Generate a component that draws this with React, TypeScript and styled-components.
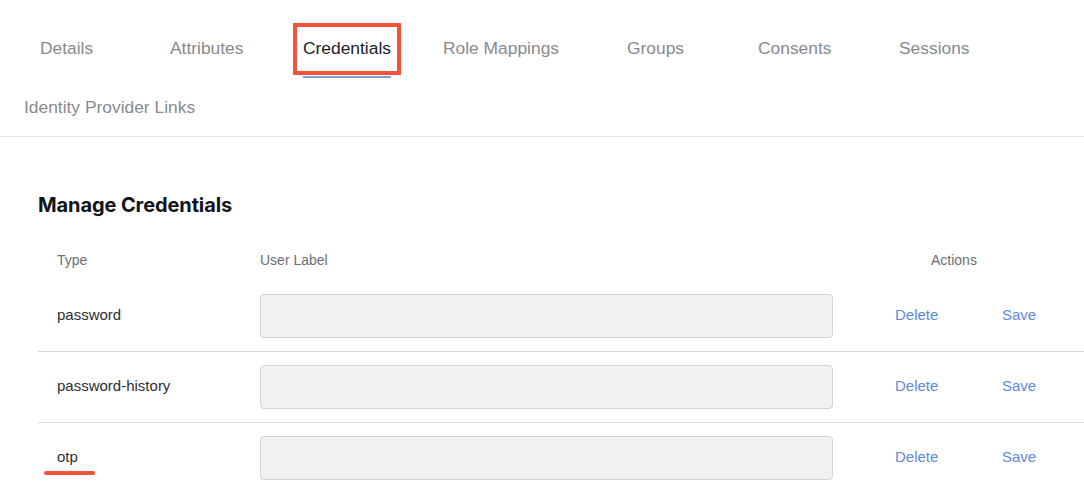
import React from "react";
import styled, { createGlobalStyle } from "styled-components";

const GlobalStyle = createGlobalStyle`
  body {
    margin: 0;
    background: #ffffff;
    font-family: "Liberation Sans", Arial, sans-serif;
  }
`;

const Page = styled.div`
  width: 1084px;
  min-height: 500px;
  background: #fff;
  overflow: hidden;
`;

const TabBar = styled.nav`
  padding: 38px 0 19px 24px;
  border-bottom: 1px solid #e6e6e6;
`;

const TabRow = styled.div`
  display: flex;
  align-items: flex-start;
`;

const Tab = styled.div<{ $width?: number; $flush?: boolean }>`
  position: relative;
  width: ${(p) => (p.$width ? `${p.$width}px` : "auto")};
  padding-left: ${(p) => (p.$flush ? 0 : 16)}px;
  box-sizing: border-box;
  margin-top: ${(p) => (p.$flush ? 19 : 0)}px;
`;

const TabLabel = styled.span<{ $active?: boolean }>`
  position: relative;
  display: inline-block;
  font-size: 17.4px;
  line-height: 20px;
  white-space: nowrap;
  color: ${(p) => (p.$active ? "#1e2226" : "#878a8e")};
  padding-bottom: ${(p) => (p.$active ? 18 : 0)}px;
  border-bottom: ${(p) => (p.$active ? "2px solid #7c9fd0" : "none")};
`;

const Highlight = styled.span`
  position: absolute;
  left: -10px;
  top: -15px;
  width: 108px;
  height: 52px;
  box-sizing: border-box;
  border: 4px solid #f4533b;
  pointer-events: none;
`;

const Section = styled.section`
  padding: 56px 0 0 38px;
`;

const Heading = styled.h2`
  margin: 0 0 22px;
  font-family: Inter, "Noto Sans", sans-serif;
  font-weight: 700;
  font-size: 20px;
  line-height: 24px;
  color: #111418;
  letter-spacing: -0.1px;
`;

const Grid = styled.div`
  display: grid;
  grid-template-columns: 222px 573px 1fr;
`;

const HeadCell = styled.div<{ $pad?: number }>`
  height: 42px;
  display: flex;
  align-items: center;
  padding-left: ${(p) => p.$pad ?? 0}px;
  font-size: 14px;
  color: #6b6f74;
`;

const Row = styled.div<{ $last?: boolean }>`
  grid-column: 1 / -1;
  display: grid;
  grid-template-columns: 222px 573px 1fr;
  align-items: center;
  padding: 13px 0;
  border-bottom: ${(p) => (p.$last ? "none" : "1px solid #dcdcdc")};
`;

const TypeCell = styled.div`
  position: relative;
  padding: 0 0 4px 19px;
  font-size: 15px;
  color: #2b2f33;
`;

// red underline drawn under the otp entry
const Mark = styled.span`
  position: absolute;
  left: 6px;
  top: 23px;
  width: 51px;
  height: 4px;
  border-radius: 2px;
  background: #f4533b;
`;

const LabelInput = styled.input`
  width: 100%;
  height: 44px;
  box-sizing: border-box;
  background: #f1f1f1;
  border: 1px solid #d4d4d4;
  border-radius: 4px;
  outline: none;
`;

const Actions = styled.div`
  display: flex;
  padding: 0 0 4px 62px;
`;

const LinkButton = styled.button<{ $width?: number }>`
  width: ${(p) => (p.$width ? `${p.$width}px` : "auto")};
  padding: 0;
  text-align: left;
  background: none;
  border: none;
  font-family: "Liberation Sans", Arial, sans-serif;
  font-size: 15px;
  color: #5d8cd8;
  cursor: pointer;
`;

const tabs = [
  { name: "Details", width: 130 },
  { name: "Attributes", width: 133 },
  { name: "Credentials", width: 140, active: true },
  { name: "Role Mappings", width: 184 },
  { name: "Groups", width: 131 },
  { name: "Consents", width: 141 },
  { name: "Sessions", width: 130 },
];

const credentials = ["password", "password-history", "otp"];

export default function App() {
  return (
    <Page>
      <GlobalStyle />
      <TabBar>
        <TabRow>
          {tabs.map((t) => (
            <Tab key={t.name} $width={t.width}>
              <TabLabel $active={t.active}>
                {t.name}
                {t.active && <Highlight />}
              </TabLabel>
            </Tab>
          ))}
        </TabRow>
        <TabRow>
          <Tab $flush>
            <TabLabel>Identity Provider Links</TabLabel>
          </Tab>
        </TabRow>
      </TabBar>
      <Section>
        <Heading>Manage Credentials</Heading>
        <Grid>
          <HeadCell $pad={19}>Type</HeadCell>
          <HeadCell>User Label</HeadCell>
          <HeadCell $pad={98}>Actions</HeadCell>
          {credentials.map((c, i) => (
            <Row key={c} $last={i === credentials.length - 1}>
              <TypeCell>
                {c}
                {c === "otp" && <Mark />}
              </TypeCell>
              <LabelInput aria-label={`${c} user label`} />
              <Actions>
                <LinkButton $width={107}>Delete</LinkButton>
                <LinkButton>Save</LinkButton>
              </Actions>
            </Row>
          ))}
        </Grid>
      </Section>
    </Page>
  );
}
